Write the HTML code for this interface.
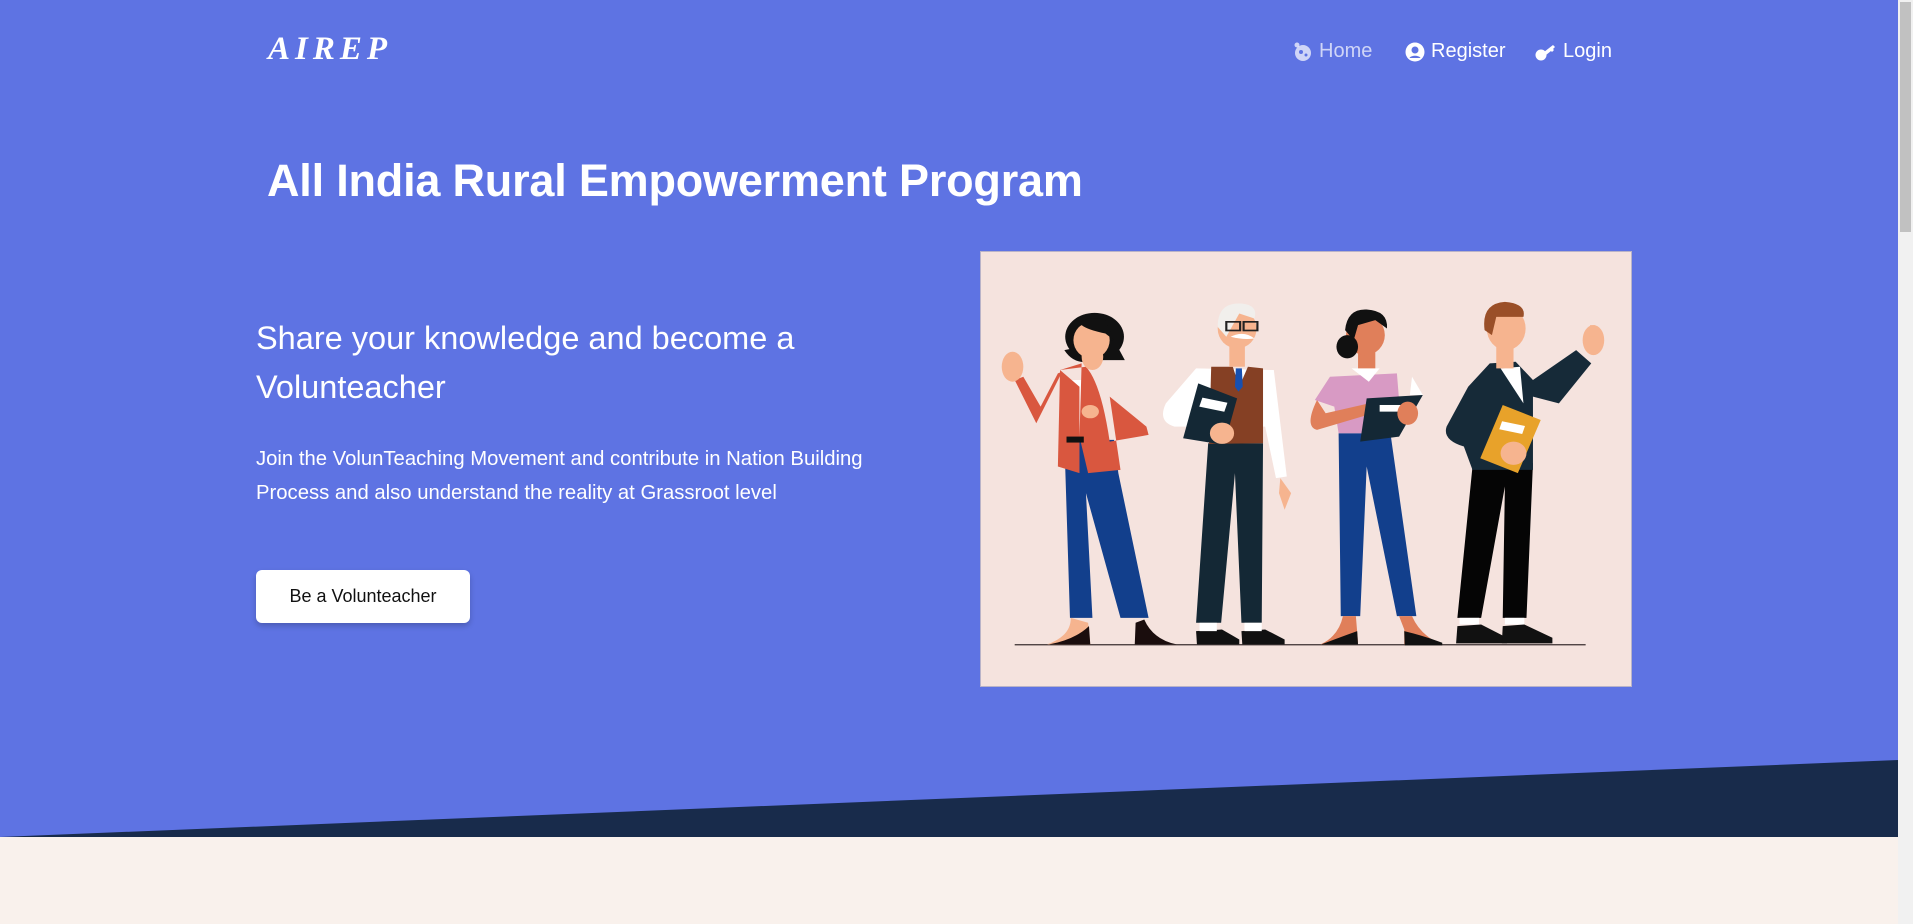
<!DOCTYPE html>
<html><head><meta charset="utf-8"><style>
*{margin:0;padding:0;box-sizing:border-box}
html,body{width:1913px;height:924px;overflow:hidden;font-family:"Liberation Sans",sans-serif}
body{background:#f9f1ec;position:relative}
.hero{position:absolute;left:0;top:0;width:1898px;height:837px;background:#5e73e3}
.band{position:absolute;left:0;top:760px;width:1898px;height:77px}
.scroll{position:absolute;right:0;top:0;width:15px;height:924px;background:#f1f1f1}
.thumb{position:absolute;right:2px;top:2px;width:11px;height:230px;background:#c1c1c1}
.logo{position:absolute;left:268px;top:31px;font-family:"Liberation Serif",serif;font-style:italic;font-weight:bold;font-size:33px;color:#fff;letter-spacing:5px}
.nav{position:absolute;top:40px;color:#fff;font-size:20px;display:flex;align-items:center;gap:6px}
.nav svg{display:block}
h1{position:absolute;left:267px;top:155px;color:#fff;font-size:45px;font-weight:bold;letter-spacing:-0.2px}
.sub{position:absolute;left:256px;top:314px;color:#fff;font-size:32.5px;font-weight:300;line-height:49px;width:580px}
.p{position:absolute;left:256px;top:442px;color:#fff;font-size:20.3px;line-height:34px;width:660px}
.btn{position:absolute;left:256px;top:570px;width:214px;height:53px;background:#fff;border-radius:6px;box-shadow:0 3px 6px rgba(0,0,0,.2);font-size:18px;color:#111;display:flex;align-items:center;justify-content:center}
.pic{position:absolute;left:980px;top:251px;width:652px;height:436px;background:#f5e3de;border:1px solid #b9b3c8}
</style></head><body>
<div class="hero"></div>
<svg class="band" viewBox="0 0 1898 77" preserveAspectRatio="none"><polygon points="0,77 1898,0 1898,77" fill="#182b4b"/></svg>
<div class="scroll"><div class="thumb"></div></div>
<div class="logo">AIREP</div>
<div class="nav" style="left:1293px;color:rgba(255,255,255,.7)"><svg width="20" height="20" viewBox="0 0 20 20"><circle cx="10" cy="11" r="8" fill="rgba(255,255,255,.7)"/><circle cx="4" cy="3" r="2.5" fill="rgba(255,255,255,.7)"/><circle cx="8" cy="10" r="2" fill="#5e73e3"/><circle cx="13" cy="13" r="1.5" fill="#5e73e3"/></svg>Home</div>
<div class="nav" style="left:1405px"><svg width="20" height="20" viewBox="0 0 20 20"><circle cx="10" cy="10" r="9.5" fill="#fff"/><circle cx="10" cy="8" r="3.5" fill="#5e73e3"/><path d="M4.5 16c1.5-3 9.5-3 11 0" fill="#5e73e3"/></svg>Register</div>
<div class="nav" style="left:1535px"><svg width="22" height="20" viewBox="0 0 22 20"><circle cx="6" cy="13" r="5.5" fill="#fff"/><path d="M9 10l9-7 2 2-2 2 1 1-2 2-1-1-5 4z" fill="#fff"/></svg>Login</div>
<h1>All India Rural Empowerment Program</h1>
<div class="sub">Share your knowledge and become a Volunteacher</div>
<div class="p">Join the VolunTeaching Movement and contribute in Nation Building Process and also understand the reality at Grassroot level</div>
<div class="btn">Be a Volunteacher</div>
<div class="pic"><svg width="650" height="434" viewBox="22 35 1505 1305" preserveAspectRatio="none">
<line x1="100" y1="1216" x2="1422" y2="1216" stroke="#3b3030" stroke-width="4"/>
<polygon points="215,600 330,600 340,700 410,1135 345,1135 265,760 280,1135 228,1135" fill="#123f8c"/>
<path d="M230 1135 L270 1150 L275 1215 L175 1215 Q230 1190 230 1135Z" fill="#f6b48f"/>
<path d="M180 1215 L275 1215 L272 1160 Q240 1200 180 1215Z" fill="#1a0d0d"/>
<path d="M380 1150 L400 1140 Q420 1200 475 1215 L378 1215Z" fill="#1a0d0d"/>
<rect x="218" y="420" width="45" height="180" fill="#fff"/>
<path d="M205 390 L255 370 L250 590 L270 700 L345 690 L320 470 L405 560 L410 585 L320 605 Q300 430 265 380Z" fill="#d9573f"/>
<path d="M205 390 L200 680 L250 700 L250 440Z" fill="#d9573f"/>
<path d="M210 395 L150 550 L100 420 L120 410 L160 500 L200 400Z" fill="#d9573f"/>
<ellipse cx="95" cy="380" rx="25" ry="45" fill="#f6b48f"/>
<rect x="220" y="590" width="40" height="18" fill="#111"/>
<ellipse cx="285" cy="290" rx="68" ry="72" fill="#111"/>
<path d="M215 330 Q240 380 285 360 L355 360 Q330 300 330 300Z" fill="#111"/>
<ellipse cx="280" cy="350" rx="25" ry="40" fill="#f6b48f"/>
<ellipse cx="278" cy="300" rx="42" ry="55" fill="#f6b48f"/>
<path d="M240 265 Q260 220 310 240 L330 300 L310 280 Q270 270 255 255Z" fill="#111"/>
<ellipse cx="275" cy="515" rx="20" ry="20" fill="#f6b48f"/>
<polygon points="548,610 675,610 672,1150 625,1150 610,700 578,1150 520,1150" fill="#142835"/>
<path d="M520 1175 L580 1170 L620 1200 L620 1215 L522 1215Z" fill="#111"/>
<path d="M625 1175 L680 1170 L725 1200 L725 1215 L627 1215Z" fill="#111"/>
<rect x="528" y="1150" width="40" height="25" fill="#fff"/><rect x="632" y="1150" width="40" height="25" fill="#fff"/>
<path d="M520 385 L700 390 L730 710 L705 715 L680 560 L470 560 Q430 545 450 490Z" fill="#fff"/>
<path d="M555 380 L605 380 L620 440 L640 380 L675 385 L675 610 L550 612Z" fill="#854024"/>
<polygon points="612,385 626,385 628,440 618,455 610,440" fill="#1750b0"/>
<path d="M715 715 L740 760 L725 810 L712 760Z" fill="#f6b48f"/>
<polygon points="525,430 615,475 585,615 490,595" fill="#142835"/>
<rect x="530" y="480" width="60" height="28" fill="#fff" transform="rotate(15 560 494)"/>
<ellipse cx="580" cy="580" rx="28" ry="32" fill="#f6b48f"/>
<rect x="597" y="300" width="36" height="80" fill="#f6b48f"/>
<ellipse cx="615" cy="265" rx="45" ry="60" fill="#f6b48f"/>
<path d="M570 260 Q570 185 625 190 Q665 195 655 235 L620 220 L590 290 Z" fill="#f1efec"/>
<path d="M600 290 Q630 270 655 295 Q630 300 600 290Z" fill="#fff"/>
<rect x="590" y="245" width="32" height="26" fill="none" stroke="#222" stroke-width="5"/><rect x="630" y="245" width="32" height="26" fill="none" stroke="#222" stroke-width="5"/>
<polygon points="850,580 970,580 1030,1130 985,1130 915,680 900,1130 855,1130" fill="#123f8c"/>
<path d="M860 1130 L890 1130 L895 1210 L808 1215 Q850 1190 860 1130Z" fill="#e07f5a"/>
<path d="M810 1215 L895 1215 L893 1175 Q850 1195 810 1215Z" fill="#111"/>
<path d="M990 1130 L1020 1130 Q1040 1190 1090 1215 L1002 1215 L1002 1170Z" fill="#e07f5a"/>
<path d="M1002 1175 Q1050 1190 1090 1210 L1090 1218 L1003 1218Z" fill="#111"/>
<path d="M830 410 L985 400 L990 480 L970 580 L850 580 L840 500 L795 480Z" fill="#d89ac4"/>
<path d="M800 480 Q770 560 800 570 L930 520 L920 490 L820 520Z" fill="#e07f5a"/>
<polygon points="915,475 1045,465 990,590 900,605" fill="#142835"/>
<rect x="945" y="495" width="50" height="20" fill="#fff"/>
<path d="M1020 410 L1045 465 L1015 465Z" fill="#fff"/>
<ellipse cx="1010" cy="520" rx="24" ry="35" fill="#e07f5a"/>
<rect x="895" y="320" width="40" height="70" fill="#e07f5a"/>
<path d="M880 385 L945 385 L920 425Z" fill="#fff"/>
<ellipse cx="912" cy="285" rx="45" ry="60" fill="#e07f5a"/>
<path d="M865 270 Q870 205 915 208 Q965 212 962 265 L935 240 L895 255 L885 300Z" fill="#111"/>
<ellipse cx="870" cy="320" rx="25" ry="35" fill="#111"/>
<polygon points="1160,680 1300,670 1285,1135 1230,1135 1235,740 1180,1135 1125,1135" fill="#050505"/>
<rect x="1130" y="1135" width="45" height="20" fill="#fff"/><rect x="1235" y="1135" width="45" height="20" fill="#fff"/>
<path d="M1125 1160 L1180 1155 L1240 1195 L1240 1212 L1122 1212Z" fill="#111"/>
<path d="M1230 1160 L1280 1155 L1345 1195 L1345 1212 L1228 1212Z" fill="#111"/>
<path d="M1200 370 L1260 365 L1300 420 L1400 330 L1435 370 L1360 490 L1300 470 L1300 690 L1160 690 L1140 620 Q1090 600 1100 560 L1150 440Z" fill="#162a38"/>
<path d="M1225 385 L1270 380 L1278 490 Z" fill="#fff"/>
<ellipse cx="1440" cy="300" rx="25" ry="45" fill="#f6b48f"/>
<rect x="1432" y="255" width="12" height="35" fill="#f6b48f"/>
<polygon points="1230,495 1318,540 1265,700 1178,655" fill="#e8a22a"/>
<rect x="1225" y="550" width="55" height="25" fill="#fff" transform="rotate(15 1250 560)"/>
<ellipse cx="1255" cy="640" rx="30" ry="35" fill="#f6b48f"/>
<rect x="1215" y="310" width="40" height="75" fill="#f6b48f"/>
<ellipse cx="1238" cy="265" rx="45" ry="65" fill="#f6b48f"/>
<path d="M1188 270 Q1180 190 1235 185 Q1285 190 1278 230 L1215 230 L1205 285Z" fill="#9a4f28"/>
</svg></div>
</body></html>
